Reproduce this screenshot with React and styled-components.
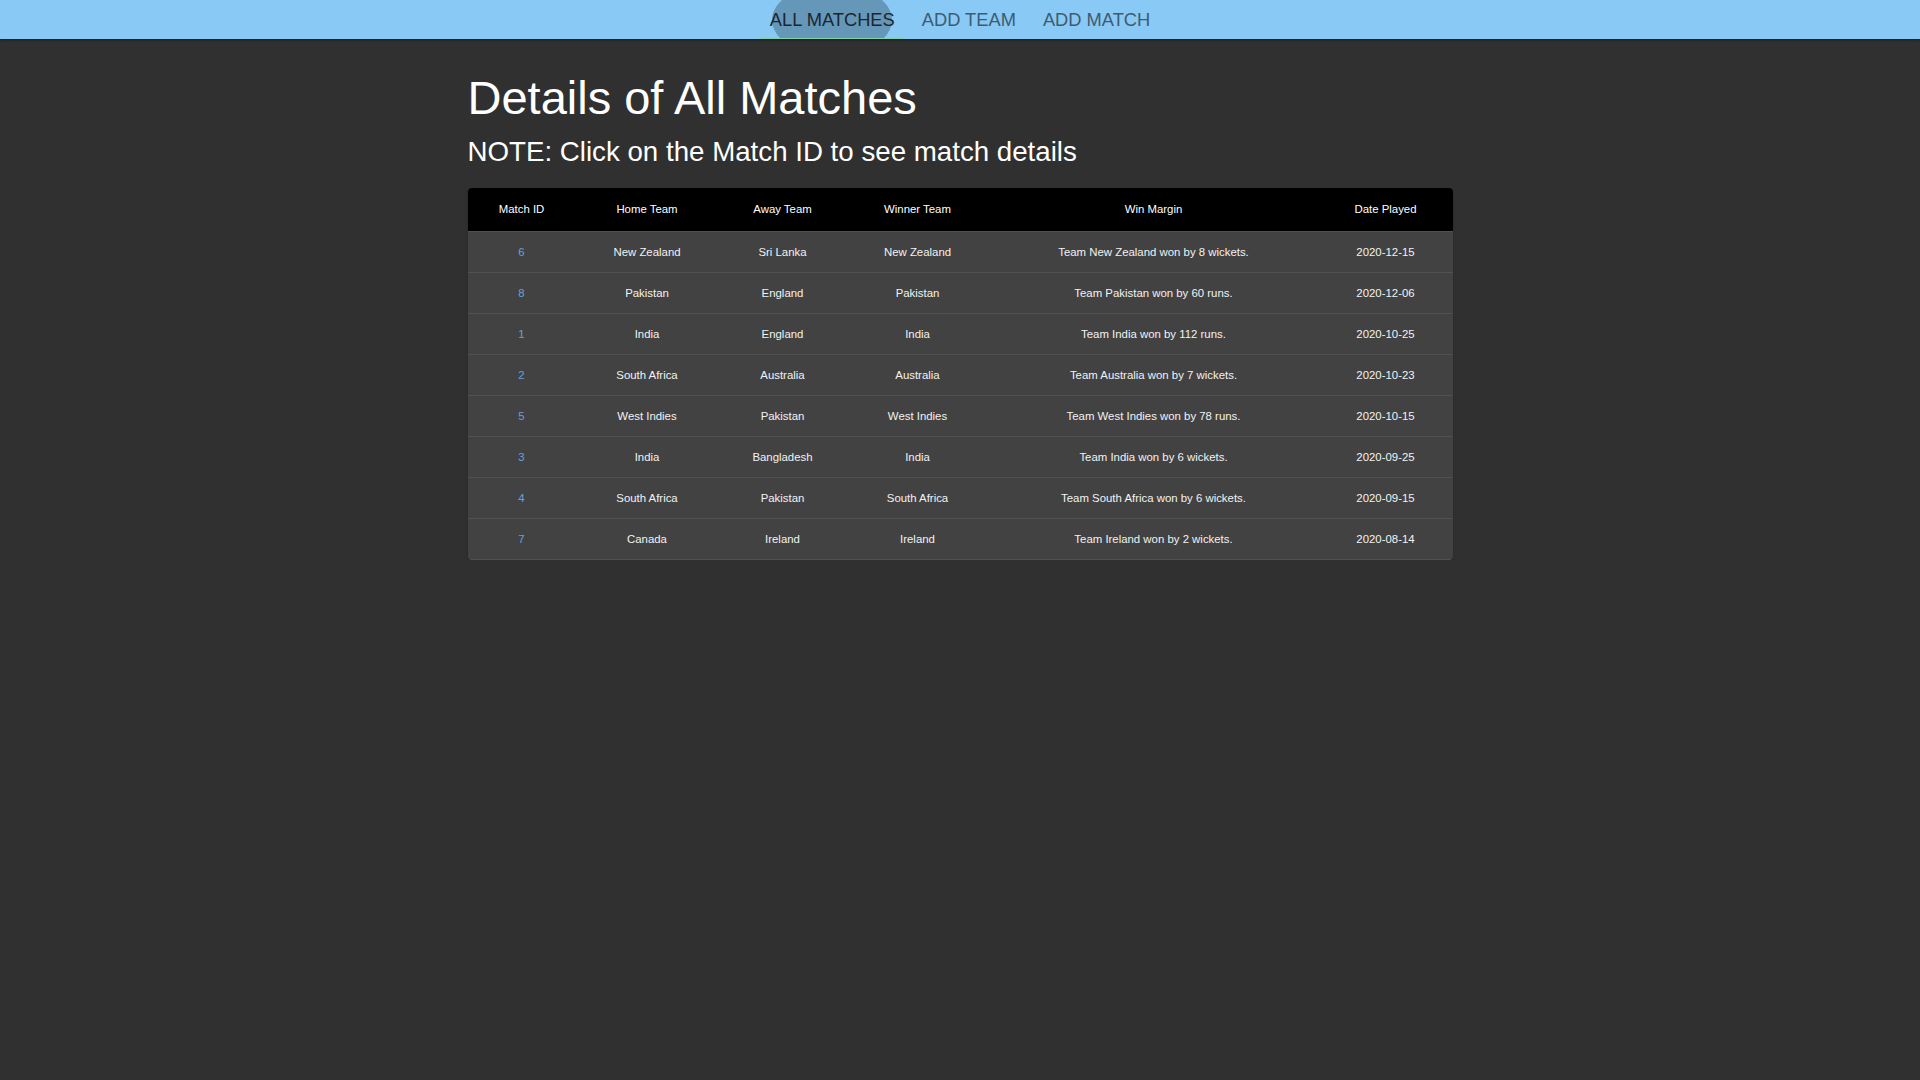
import React from 'react';
import styled, { createGlobalStyle } from 'styled-components';

const GlobalStyle = createGlobalStyle`
  html, body {
    margin: 0;
    padding: 0;
    background-color: #303030;
    font-family: "Liberation Sans", Arial, sans-serif;
    color: #fff;
  }
`;

const NavBar = styled.nav`
  height: 39px;
  background-color: #88c9f5;
  display: flex;
  justify-content: center;
  align-items: stretch;
  overflow: hidden;
  box-shadow: 0 1px 3px rgba(0, 0, 0, 0.4);
`;

const NavItem = styled.a`
  position: relative;
  display: flex;
  align-items: center;
  padding: 1px 13.5px 0;
  font-size: 18.3px;
  color: ${(p) => (p.active ? '#1c2630' : '#3f5b72')};
  text-decoration: none;
  cursor: pointer;
  z-index: 0;

  &::before {
    content: '';
    display: ${(p) => (p.active ? 'block' : 'none')};
    position: absolute;
    left: 50%;
    top: -16px;
    width: 120px;
    height: 72px;
    margin-left: -60px;
    border-radius: 50%;
    background-color: #6597b9;
    z-index: -1;
  }

  &::after {
    content: '';
    display: ${(p) => (p.active ? 'block' : 'none')};
    position: absolute;
    left: 4px;
    right: 4px;
    bottom: 0;
    height: 1px;
    background-color: #7fd1b0;
  }
`;

const Main = styled.main`
  width: 985px;
  margin: 0 auto;
  padding-top: 31px;
`;

const Title = styled.h1`
  margin: 0;
  font-size: 47px;
  font-weight: 400;
  line-height: 56px;
`;

const Note = styled.h2`
  margin: 10px 0 0;
  font-size: 27.7px;
  font-weight: 400;
  line-height: 32px;
`;

const Paper = styled.div`
  margin-top: 20px;
  background-color: #424242;
  border-radius: 4px;
  overflow: hidden;
  box-shadow: 0 2px 1px -1px rgba(0, 0, 0, 0.2), 0 1px 1px 0 rgba(0, 0, 0, 0.14),
    0 1px 3px 0 rgba(0, 0, 0, 0.12);
`;

const Table = styled.table`
  width: 100%;
  border-collapse: collapse;
  table-layout: fixed;
  font-size: 11.4px;
  text-align: center;
`;

const HeadCell = styled.th`
  height: 42px;
  padding: 0 0 1px;
  font-weight: 400;
  background-color: #000;
  color: #fff;
  border-bottom: 1px solid #515151;
`;

const Cell = styled.td`
  height: 40px;
  padding: 0;
  color: #f2f2f2;
  border-bottom: 1px solid #515151;
`;

const MatchLink = styled.a`
  color: #64a3da;
  text-decoration: none;
  cursor: pointer;
`;

const columns = [
  { label: 'Match ID', width: 108 },
  { label: 'Home Team', width: 143 },
  { label: 'Away Team', width: 128 },
  { label: 'Winner Team', width: 142 },
  { label: 'Win Margin', width: 330 },
  { label: 'Date Played', width: 134 },
];

const matches = [
  { id: 6, home: 'New Zealand', away: 'Sri Lanka', winner: 'New Zealand', margin: 'Team New Zealand won by 8 wickets.', date: '2020-12-15' },
  { id: 8, home: 'Pakistan', away: 'England', winner: 'Pakistan', margin: 'Team Pakistan won by 60 runs.', date: '2020-12-06' },
  { id: 1, home: 'India', away: 'England', winner: 'India', margin: 'Team India won by 112 runs.', date: '2020-10-25' },
  { id: 2, home: 'South Africa', away: 'Australia', winner: 'Australia', margin: 'Team Australia won by 7 wickets.', date: '2020-10-23' },
  { id: 5, home: 'West Indies', away: 'Pakistan', winner: 'West Indies', margin: 'Team West Indies won by 78 runs.', date: '2020-10-15' },
  { id: 3, home: 'India', away: 'Bangladesh', winner: 'India', margin: 'Team India won by 6 wickets.', date: '2020-09-25' },
  { id: 4, home: 'South Africa', away: 'Pakistan', winner: 'South Africa', margin: 'Team South Africa won by 6 wickets.', date: '2020-09-15' },
  { id: 7, home: 'Canada', away: 'Ireland', winner: 'Ireland', margin: 'Team Ireland won by 2 wickets.', date: '2020-08-14' },
];

function App() {
  return (
    <>
      <GlobalStyle />
      <NavBar>
        <NavItem active>ALL MATCHES</NavItem>
        <NavItem>ADD TEAM</NavItem>
        <NavItem>ADD MATCH</NavItem>
      </NavBar>
      <Main>
        <Title>Details of All Matches</Title>
        <Note>NOTE: Click on the Match ID to see match details</Note>
        <Paper>
          <Table>
            <colgroup>
              {columns.map((col) => (
                <col key={col.label} style={{ width: col.width }} />
              ))}
            </colgroup>
            <thead>
              <tr>
                {columns.map((col) => (
                  <HeadCell key={col.label}>{col.label}</HeadCell>
                ))}
              </tr>
            </thead>
            <tbody>
              {matches.map((m) => (
                <tr key={m.id}>
                  <Cell>
                    <MatchLink>{m.id}</MatchLink>
                  </Cell>
                  <Cell>{m.home}</Cell>
                  <Cell>{m.away}</Cell>
                  <Cell>{m.winner}</Cell>
                  <Cell>{m.margin}</Cell>
                  <Cell>{m.date}</Cell>
                </tr>
              ))}
            </tbody>
          </Table>
        </Paper>
      </Main>
    </>
  );
}

export default App;
